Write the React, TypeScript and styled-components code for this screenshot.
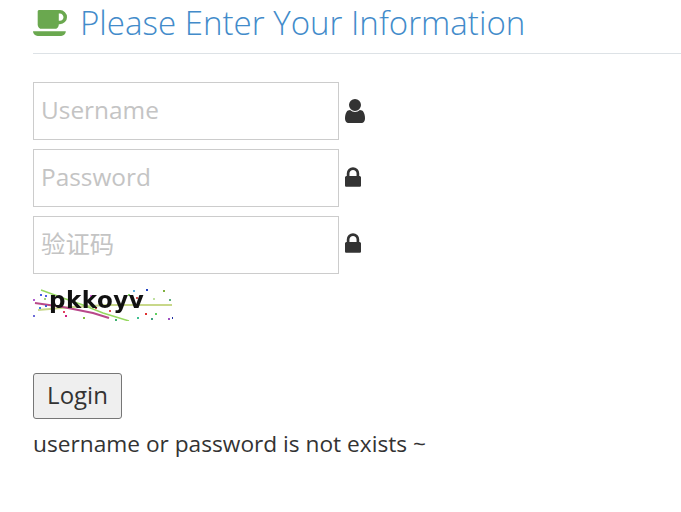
import React from 'react';
import styled, { createGlobalStyle } from 'styled-components';

const GlobalStyle = createGlobalStyle`
  html, body {
    margin: 0;
    padding: 0;
    background: #fff;
    font-family: "Open Sans", "Noto Sans CJK SC", sans-serif;
    color: #333;
  }
`;

const Page = styled.div`
  width: 681px;
  height: 512px;
  padding-left: 33px;
  box-sizing: border-box;
  overflow: hidden;
`;

const Header = styled.h1`
  display: flex;
  align-items: center;
  gap: 13px;
  height: 53px;
  margin: 0 0 28px;
  border-bottom: 1px solid #dde2e6;
  font-size: 33.1px;
  font-weight: 300;
  line-height: 45px;
  color: #428bca;
  span {
    margin-top: -9px;
  }
`;

const CupIcon = styled.svg`
  flex: none;
  width: 34px;
  height: 26px;
  margin-top: -8px;
  fill: #6aa84f;
`;

const Form = styled.form`
  display: flex;
  flex-direction: column;
  gap: 9px;
  align-items: flex-start;
`;

const Row = styled.div`
  display: flex;
  align-items: flex-start;
  gap: 6px;
`;

const Input = styled.input`
  width: 306px;
  height: 58px;
  box-sizing: border-box;
  padding: 0 7px 4px;
  border: 1px solid #ccc;
  font-family: "Open Sans", "Noto Sans CJK SC", sans-serif;
  font-size: 24.4px;
  outline: none;
  &::placeholder {
    color: #c4c4c4;
    opacity: 1;
  }
`;

const FieldIcon = styled.svg<{ $top: number }>`
  flex: none;
  margin-top: ${(p) => p.$top}px;
  fill: #333;
`;

const Captcha = styled.div`
  position: relative;
  width: 140px;
  height: 36px;
  margin-top: 2px;
  margin-bottom: 43px;
  svg {
    position: absolute;
    inset: 0;
  }
`;

const CaptchaText = styled.span`
  position: absolute;
  left: 16px;
  top: 0;
  font-family: "DejaVu Sans", sans-serif;
  font-size: 23px;
  line-height: 30px;
  font-weight: 700;
  letter-spacing: 0.5px;
  color: #111;
  filter: blur(0.5px);
`;

const LoginButton = styled.button`
  width: 89px;
  height: 46px;
  padding: 0 0 4px;
  border: 1px solid #767676;
  border-radius: 3px;
  background: #efefef;
  font-family: "Open Sans", sans-serif;
  font-size: 24px;
  color: #333;
`;

const Message = styled.p`
  margin: 8px 0 0;
  font-size: 22.7px;
  line-height: 34px;
  color: #333;
`;

const dots: [number, number, string][] = [
  [0, 30, '#6c6cd8'], [0, 14, '#b060d0'], [6, 22, '#4080e0'], [11, 13, '#a0d080'],
  [12, 20, '#4060d0'], [20, 17, '#5070e0'], [30, 26, '#e04060'], [32, 30, '#d02080'],
  [50, 32, '#80c040'], [57, 10, '#e070e0'], [7, 9, '#4060e0'], [12, 10, '#5060e0'],
  [100, 5, '#60b0e0'], [104, 32, '#40c090'], [113, 4, '#2040c0'], [112, 28, '#e03030'],
  [118, 33, '#40a080'], [122, 28, '#60d060'], [130, 5, '#80b040'], [136, 14, '#60b080'],
  [135, 33, '#a050c0'], [139, 32, '#2030a0'], [103, 12, '#d05050'], [107, 12, '#e05050'],
  [120, 13, '#c0e0a0'], [88, 20, '#5090e0'], [76, 25, '#e05050'], [82, 34, '#40b070'],
  [62, 22, '#c04040'], [95, 9, '#80d060']
];

export default function App() {
  return (
    <Page>
      <GlobalStyle />
      <Header>
        <CupIcon viewBox="0 256 1856 1408">
          <path d="M1664 640q0-80-56-136t-136-56h-64v384h64q80 0 136-56t56-136zm-1664 768h1792q0 106-75 181t-181 75h-1280q-106 0-181-75t-75-181zm1856-768q0 159-112.500 271.500t-271.500 112.500h-64v32q0 92-66 158t-158 66h-704q-92 0-158-66t-66-158v-736q0-26 19-45t45-19h1152q159 0 271.500 112.500t112.500 271.500z" />
        </CupIcon>
        <span>Please Enter Your Information</span>
      </Header>
      <Form onSubmit={(e) => e.preventDefault()}>
        <Row>
          <Input placeholder="Username" />
          <FieldIcon $top={17} width="20" height="24" viewBox="256 128 1280 1536">
            <path d="M1536 1399q0 109-62.500 187t-150.500 78h-854q-88 0-150.500-78t-62.500-187q0-85 8.500-160.500t31.500-152 58.500-131 94-89 134.500-34.500q131 128 313 128t313-128q76 0 134.500 34.500t94 89 58.500 131 31.500 152 8.500 160.500zm-256-887q0 159-112.500 271.500t-271.500 112.500-271.500-112.500-112.500-271.500 112.500-271.500 271.500-112.500 271.500 112.500 112.500 271.500z" />
          </FieldIcon>
        </Row>
        <Row>
          <Input placeholder="Password" />
          <FieldIcon $top={18} width="16" height="20" viewBox="320 128 1152 1408">
            <path d="M640 768h512v-192q0-106-75-181t-181-75-181 75-75 181v192zm832 96v576q0 40-28 68t-68 28h-960q-40 0-68-28t-28-68v-576q0-40 28-68t68-28h32v-192q0-184 132-316t316-132 316 132 132 316v192h32q40 0 68 28t28 68z" />
          </FieldIcon>
        </Row>
        <Row>
          <Input placeholder="验证码" />
          <FieldIcon $top={17} width="16" height="20" viewBox="320 128 1152 1408">
            <path d="M640 768h512v-192q0-106-75-181t-181-75-181 75-75 181v192zm832 96v576q0 40-28 68t-68 28h-960q-40 0-68-28t-28-68v-576q0-40 28-68t68-28h32v-192q0-184 132-316t316-132 316 132 132 316v192h32q40 0 68 28t28 68z" />
          </FieldIcon>
        </Row>
        <Captcha>
          <svg width="140" height="36" viewBox="0 0 140 36">
            <path d="M5 25 L40 22 L75 20 L139 20" stroke="#c8d88a" strokeWidth="2" fill="none" />
            <path d="M2 18 L30 22 L60 28 L76 33" stroke="#b8488a" strokeWidth="2" fill="none" />
            <path d="M8 5 L30 13 L50 20 L70 28 L96 36" stroke="#96d860" strokeWidth="1.5" fill="none" />
            {dots.map(([x, y, c], i) => (
              <rect key={i} x={x} y={y} width="2" height="2" fill={c} />
            ))}
          </svg>
          <CaptchaText>pkkoyv</CaptchaText>
        </Captcha>
        <LoginButton type="submit">Login</LoginButton>
      </Form>
      <Message>username or password is not exists ~</Message>
    </Page>
  );
}
